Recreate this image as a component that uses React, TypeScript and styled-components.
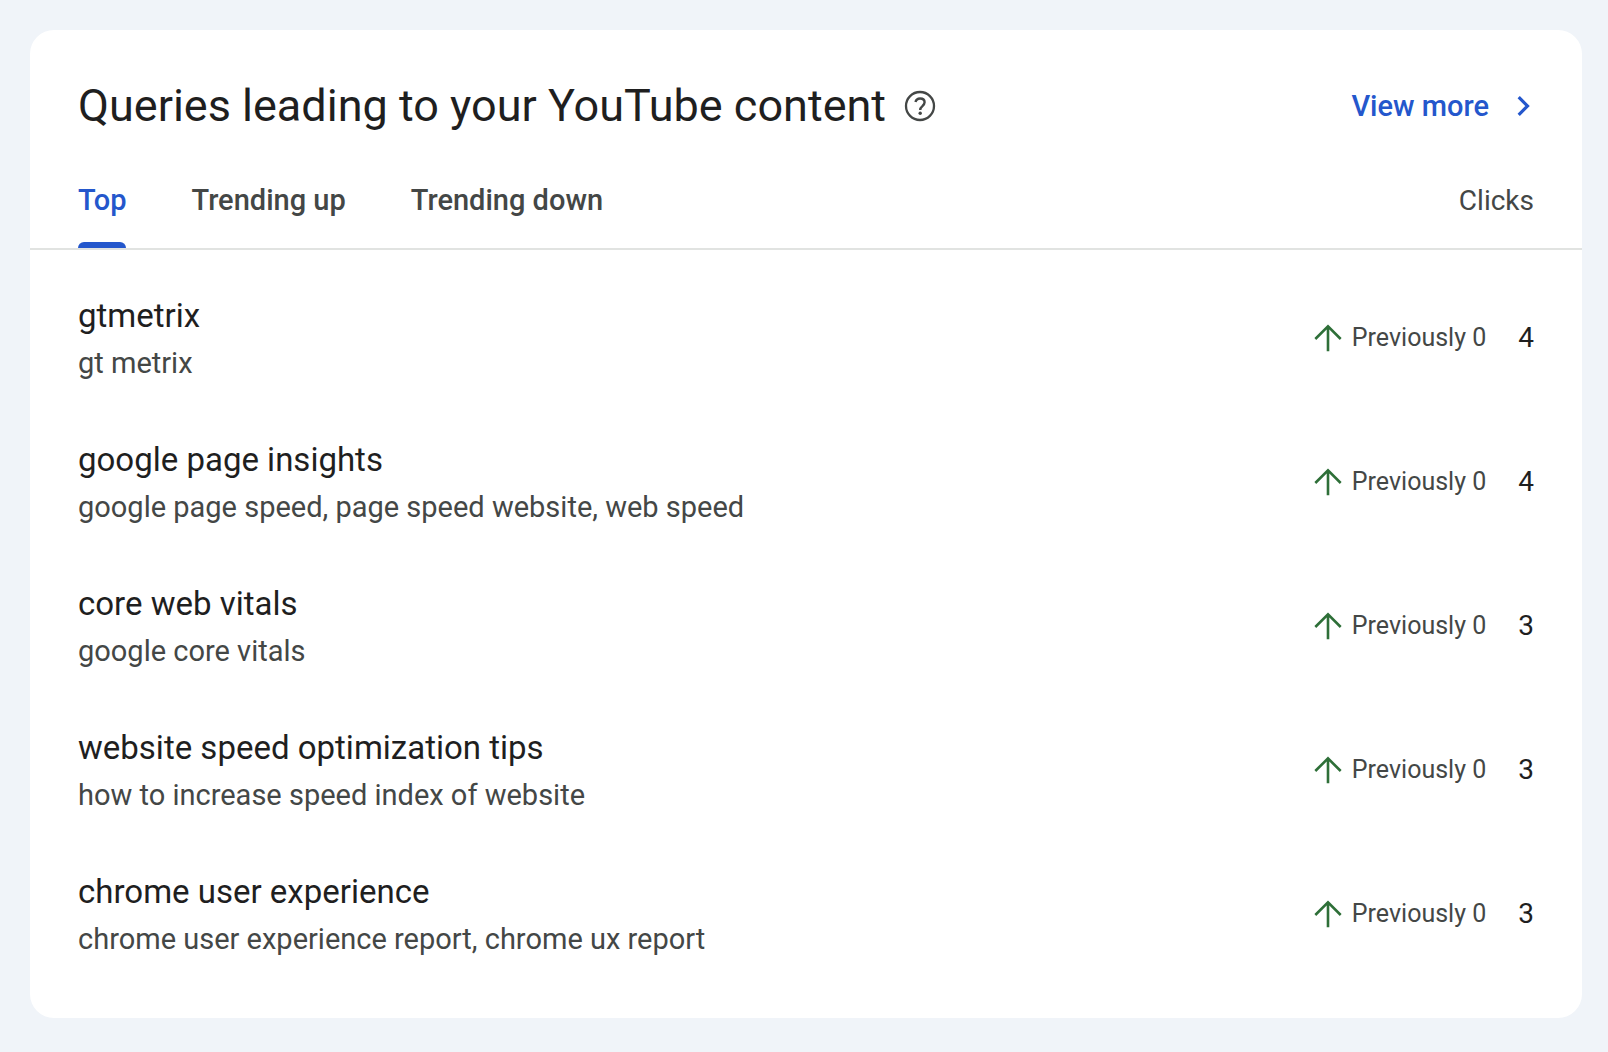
import React, { useState } from 'react';
import styled, { createGlobalStyle } from 'styled-components';

const color = {
  page: '#f0f4f9',
  surface: '#ffffff',
  text: '#1f1f1f',
  muted: '#444746',
  link: '#2457cc',
  divider: '#e1e3e1',
  positive: '#2e6f38',
};

const GlobalStyle = createGlobalStyle`
  *, *::before, *::after { box-sizing: border-box; }
  body {
    margin: 0;
    background: ${color.page};
    color: ${color.text};
    font-family: Roboto, "Liberation Sans", sans-serif;
  }
`;

const Page = styled.main`
  padding: 30px 26px 34px 30px;
`;

const Card = styled.section`
  padding: 48px 0 32px;
  border-radius: 24px;
  background: ${color.surface};
`;

const Header = styled.header`
  display: flex;
  align-items: center;
  justify-content: space-between;
  padding: 0 48px;
`;

const Heading = styled.div`
  display: flex;
  align-items: center;
  gap: 16px;
`;

const Title = styled.h2`
  margin: 0;
  font-size: 45px;
  font-weight: 400;
  line-height: 56px;
`;

const HelpButton = styled.button`
  display: flex;
  padding: 0;
  border: 0;
  background: none;
  color: ${color.muted};
  cursor: pointer;
`;

const ViewMore = styled.a`
  display: flex;
  align-items: center;
  gap: 16px;
  color: ${color.link};
  font-size: 29px;
  font-weight: 500;
  line-height: 40px;
  text-decoration: none;
`;

const TabBar = styled.div`
  display: flex;
  align-items: flex-start;
  justify-content: space-between;
  margin-top: 46px;
  padding: 0 48px;
  border-bottom: 2px solid ${color.divider};
`;

const TabList = styled.div`
  display: flex;
  gap: 65px;
`;

const Tab = styled.button<{ $active: boolean }>`
  position: relative;
  padding: 0 0 28px;
  border: 0;
  background: none;
  color: ${p => (p.$active ? color.link : color.muted)};
  font-family: inherit;
  font-size: 29px;
  font-weight: 500;
  line-height: 40px;
  cursor: pointer;

  &::after {
    content: '';
    display: ${p => (p.$active ? 'block' : 'none')};
    position: absolute;
    left: 0;
    right: 0;
    bottom: 0;
    height: 6px;
    border-radius: 6px 6px 0 0;
    background: ${color.link};
  }
`;

const ColumnLabel = styled.span`
  color: ${color.muted};
  font-size: 28px;
  line-height: 42px;
`;

const QueryList = styled.ul`
  margin: 0;
  padding: 16px 0 0;
  list-style: none;
`;

const QueryRow = styled.li`
  display: flex;
  align-items: center;
  justify-content: space-between;
  min-height: 144px;
  padding: 0 48px;
`;

const QueryName = styled.div`
  font-size: 33px;
  line-height: 50px;
`;

const QueryVariants = styled.div`
  color: ${color.muted};
  font-size: 29px;
  line-height: 44px;
`;

const Metrics = styled.div`
  display: flex;
  align-items: center;
`;

const Previous = styled.span`
  margin-left: 10px;
  color: ${color.muted};
  font-size: 25px;
  line-height: 40px;
`;

const Clicks = styled.span`
  margin-left: 32px;
  font-size: 28px;
  line-height: 40px;
`;

const HelpIcon = () => (
  <svg width="36" height="36" viewBox="0 0 36 36" fill="none" aria-hidden="true">
    <circle cx="18" cy="18" r="14" stroke="currentColor" strokeWidth="2.3" />
    <path
      d="M13.500 14.100c.5-2.300 2.300-3.600 4.600-3.600 2.600 0 4.500 1.500 4.500 3.800 0 1.700-.9 2.600-2.200 3.800-1.400 1.200-2.200 2-2.200 3.800"
      stroke="currentColor"
      strokeWidth="2.4"
    />
    <circle cx="18.200" cy="25.300" r="1.700" fill="currentColor" />
  </svg>
);

const ChevronIcon = () => (
  <svg width="29" height="36" viewBox="0 0 29 36" fill="none" aria-hidden="true">
    <path d="M13.700 9.200 22.500 18l-8.800 8.800" stroke="currentColor" strokeWidth="3.2" />
  </svg>
);

const ArrowUpIcon = () => (
  <svg width="28" height="28" viewBox="0 0 28 28" fill="none" role="img" aria-label="Up">
    <path d="M14 27.300V3M1.300 15 14 2.400 26.700 15" stroke={color.positive} strokeWidth="2.600" />
  </svg>
);

const tabs = ['Top', 'Trending up', 'Trending down'];

const queries = [
  { name: 'gtmetrix', variants: 'gt metrix', previous: 0, clicks: 4 },
  { name: 'google page insights', variants: 'google page speed, page speed website, web speed', previous: 0, clicks: 4 },
  { name: 'core web vitals', variants: 'google core vitals', previous: 0, clicks: 3 },
  { name: 'website speed optimization tips', variants: 'how to increase speed index of website', previous: 0, clicks: 3 },
  { name: 'chrome user experience', variants: 'chrome user experience report, chrome ux report', previous: 0, clicks: 3 },
];

export default function App() {
  const [active, setActive] = useState(tabs[0]);
  return (
    <>
      <GlobalStyle />
      <Page>
        <Card>
          <Header>
            <Heading>
              <Title>Queries leading to your YouTube content</Title>
              <HelpButton type="button" aria-label="Help">
                <HelpIcon />
              </HelpButton>
            </Heading>
            <ViewMore href="#queries">
              View more
              <ChevronIcon />
            </ViewMore>
          </Header>
          <TabBar>
            <TabList role="tablist">
              {tabs.map(tab => (
                <Tab
                  key={tab}
                  type="button"
                  role="tab"
                  aria-selected={tab === active}
                  $active={tab === active}
                  onClick={() => setActive(tab)}
                >
                  {tab}
                </Tab>
              ))}
            </TabList>
            <ColumnLabel>Clicks</ColumnLabel>
          </TabBar>
          <QueryList id="queries">
            {queries.map(query => (
              <QueryRow key={query.name}>
                <div>
                  <QueryName>{query.name}</QueryName>
                  <QueryVariants>{query.variants}</QueryVariants>
                </div>
                <Metrics>
                  <ArrowUpIcon />
                  <Previous>Previously {query.previous}</Previous>
                  <Clicks>{query.clicks}</Clicks>
                </Metrics>
              </QueryRow>
            ))}
          </QueryList>
        </Card>
      </Page>
    </>
  );
}
